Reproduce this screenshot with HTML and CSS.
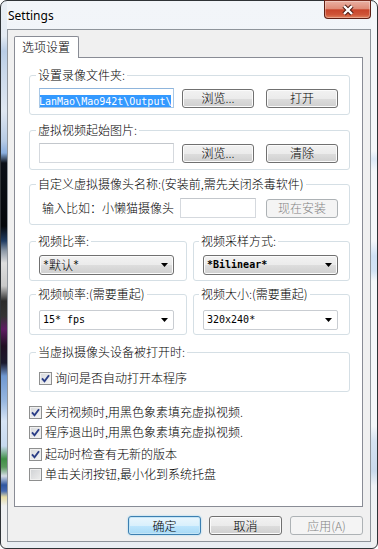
FILE: index.html
```html
<!DOCTYPE html>
<html lang="zh-CN">
<head>
    <meta charset="UTF-8">
    <meta name="viewport" content="width=device-width, initial-scale=1.0">
    <title>Settings</title>
    <link rel="stylesheet" href="styles.css">
</head>
<body>
    <div class="window">
        <div class="titlebar">
            <span class="title">Settings</span>
            <button class="close-btn" aria-label="关闭">
                <svg width="14" height="12" viewBox="0 0 14 12">
                    <path d="M3 2 L11 10 M11 2 L3 10" stroke="#4a1a12" stroke-width="4.4" fill="none"/>
                    <path d="M3 2 L11 10 M11 2 L3 10" stroke="#ffffff" stroke-width="2.4" fill="none"/>
                </svg>
            </button>
        </div>

        <div class="client">
            <div class="tabs">
                <div class="tab">选项设置</div>
            </div>

            <div class="panel">
                <!-- 录像文件夹 -->
                <fieldset class="group">
                    <legend>设置录像文件夹:</legend>
                    <div class="row">
                        <div class="textbox focused"><span class="mono sel">LanMao\Mao942t\Output\</span></div>
                        <button class="btn btn-first">浏览...</button>
                        <button class="btn btn-second">打开</button>
                    </div>
                </fieldset>

                <!-- 起始图片 -->
                <fieldset class="group group-picture">
                    <legend>虚拟视频起始图片:</legend>
                    <div class="row">
                        <div class="textbox"></div>
                        <button class="btn btn-first">浏览...</button>
                        <button class="btn btn-second">清除</button>
                    </div>
                </fieldset>

                <!-- 摄像头名称 -->
                <fieldset class="group group-name">
                    <legend>自定义虚拟摄像头名称:(安装前,需先关闭杀毒软件)</legend>
                    <div class="row">
                        <span class="hint">输入比如：小懒猫摄像头</span>
                        <div class="textbox textbox-small"></div>
                        <button class="btn btn-second" disabled>现在安装</button>
                    </div>
                </fieldset>

                <div class="pair pair-first">
                    <fieldset class="group">
                        <legend>视频比率:</legend>
                        <div class="row">
                            <div class="combo combo-list"><span class="mono">*</span><span>默认</span><span class="mono">*</span>
                                <svg class="arrow" width="7" height="4" viewBox="0 0 7 4"><polygon points="0,0 7,0 3.5,4" fill="#000"/></svg>
                            </div>
                        </div>
                    </fieldset>
                    <fieldset class="group">
                        <legend>视频采样方式:</legend>
                        <div class="row">
                            <div class="combo combo-list"><span class="mono bold">*Bilinear*</span>
                                <svg class="arrow" width="7" height="4" viewBox="0 0 7 4"><polygon points="0,0 7,0 3.5,4" fill="#000"/></svg>
                            </div>
                        </div>
                    </fieldset>
                </div>

                <div class="pair pair-second">
                    <fieldset class="group">
                        <legend>视频帧率:(需要重起)</legend>
                        <div class="row">
                            <div class="combo combo-edit"><span class="mono">15* fps</span>
                                <svg class="arrow" width="7" height="4" viewBox="0 0 7 4"><polygon points="0,0 7,0 3.5,4" fill="#000"/></svg>
                            </div>
                        </div>
                    </fieldset>
                    <fieldset class="group">
                        <legend>视频大小:(需要重起)</legend>
                        <div class="row">
                            <div class="combo combo-edit"><span class="mono">320x240*</span>
                                <svg class="arrow" width="7" height="4" viewBox="0 0 7 4"><polygon points="0,0 7,0 3.5,4" fill="#000"/></svg>
                            </div>
                        </div>
                    </fieldset>
                </div>

                <fieldset class="group group-open">
                    <legend>当虚拟摄像头设备被打开时:</legend>
                    <label class="check">
                        <span class="box"><svg width="11" height="11" viewBox="0 0 11 11"><path d="M2 5.4 L4.5 8.3 L9 2.2" stroke="#2a3d86" stroke-width="1.9" fill="none"/></svg></span>
                        询问是否自动打开本程序
                    </label>
                </fieldset>

                <div class="checks">
                    <label class="check">
                        <span class="box"><svg width="11" height="11" viewBox="0 0 11 11"><path d="M2 5.4 L4.5 8.3 L9 2.2" stroke="#2a3d86" stroke-width="1.9" fill="none"/></svg></span>
                        关闭视频时,用黑色象素填充虚拟视频.
                    </label>
                    <label class="check">
                        <span class="box"><svg width="11" height="11" viewBox="0 0 11 11"><path d="M2 5.4 L4.5 8.3 L9 2.2" stroke="#2a3d86" stroke-width="1.9" fill="none"/></svg></span>
                        程序退出时,用黑色象素填充虚拟视频.
                    </label>
                    <label class="check spaced">
                        <span class="box"><svg width="11" height="11" viewBox="0 0 11 11"><path d="M2 5.4 L4.5 8.3 L9 2.2" stroke="#2a3d86" stroke-width="1.9" fill="none"/></svg></span>
                        起动时检查有无新的版本
                    </label>
                    <label class="check">
                        <span class="box box-empty"></span>
                        单击关闭按钮,最小化到系统托盘
                    </label>
                </div>
            </div>

            <div class="footer">
                <button class="btn btn-default">确定</button>
                <button class="btn">取消</button>
                <button class="btn" disabled>应用(A)</button>
            </div>
        </div>
    </div>
</body>
</html>
```

FILE: styles.css
```css
/* Reset */
* {
    margin: 0;
    padding: 0;
    box-sizing: border-box;
}

body {
    background: #ffffff;
    font-family: "Noto Sans CJK SC", sans-serif;
    font-size: 12px;
    font-weight: 300;
    color: #000;
}

/* Window frame (Aero glass) */
.window {
    width: 378px;
    height: 549px;
    display: flex;
    flex-direction: column;
    padding: 0 6px 6px;
    border: 1px solid #2f3337;
    border-radius: 7px 7px 6px 6px;
    background:
        linear-gradient(to bottom, #e9eef4 0, #e4ebf3 35px, #b9cde6 50px, #c9d8ea 70px, #dfe7f1 110px, #b7cbe5 140px, #8aaede 152px, #0b1018 162px, #04070b 225px, #203c62 240px, #8d99a7 250px, #dedede 262px, #c9c9c9 285px, #2b2b2b 300px, #333333 315px, #5e1d63 328px, #201023 345px, #1b1a2e 362px, #6f98d1 375px, #97b7e0 400px, #d6e4f5 420px, #c7d9ef 445px, #3f8f46 458px, #5a9a5e 466px, #d5dde6 475px, #2f56a0 484px, #476ab0 490px, #e6dca3 496px, #eef0f2 505px, #f2f2f2 549px) left top / 6px 100% no-repeat,
        linear-gradient(to bottom, #f4f7fa 0, #f4f7fa 150px, #dce8f6 158px, #f4f7fa 170px, #f4f7fa 240px, #cfe0f4 255px, #d2e2f4 270px, #f4f7fa 280px, #f4f7fa 425px, #d5e2f1 440px, #c9d9ec 470px, #eef2f6 485px, #f0f0f0 549px) right top / 6px 100% no-repeat,
        linear-gradient(to bottom, #f2f5f9, #e9eef3);
}

.titlebar {
    height: 28px;
    flex-shrink: 0;
    display: flex;
    justify-content: space-between;
    align-items: flex-start;
    padding-left: 1px;
}

.title {
    font-family: "Noto Sans", sans-serif;
    font-size: 12px;
    font-weight: 400;
    line-height: 16px;
    padding-top: 7px;
    text-shadow: 0 0 5px #ffffff, 0 0 2px #ffffff;
}

.close-btn {
    width: 47px;
    height: 19px;
    margin-top: -1px;
    display: flex;
    align-items: center;
    justify-content: center;
    border: 1px solid #5e1f14;
    border-top-color: #7a2c1f;
    border-radius: 0 0 4px 4px;
    background: linear-gradient(to bottom, #eab0a3 0%, #df8d79 45%, #c8442a 52%, #cf5538 80%, #e0825f 100%);
    box-shadow: inset 0 0 0 1px rgba(255, 255, 255, 0.3);
}

/* Dialog client area */
.client {
    flex: 1;
    display: flex;
    flex-direction: column;
    background: #f0f0f0;
    border: 1px solid #8e949b;
    padding: 6px 7px 6px 6px;
}

.tabs {
    display: flex;
}

.tab {
    position: relative;
    z-index: 1;
    width: 65px;
    height: 22px;
    margin-bottom: -1px;
    padding: 3px 0 0 7px;
    border: 1px solid #898c95;
    border-bottom: none;
    border-radius: 2px 2px 0 0;
    background: #ffffff;
    line-height: 14px;
}

.panel {
    height: 450px;
    border: 1px solid #898c95;
    background: #ffffff;
    padding: 10px 12px 0 14px;
}

/* Group boxes */
.group {
    margin: 0;
    min-width: 0;
    padding: 6px 11px 6px 9px;
    border: 1px solid #d5dfe5;
    border-radius: 3px;
}

.group legend {
    margin-left: -3px;
    padding: 0 2px;
    line-height: 14px;
}

.group-picture {
    margin-top: 8px;
}

.group-name {
    margin-top: 7px;
    padding-top: 7px;
}

.pair {
    display: grid;
    grid-template-columns: 158px 157px;
    column-gap: 6px;
}

.pair .group + .group legend {
    margin-left: -4px;
}

.pair-first {
    margin-top: 9px;
}

.pair-first .group {
    padding-top: 7px;
    padding-bottom: 5px;
}

.pair-second {
    margin-top: 6px;
}

.pair-second .group {
    padding-top: 9px;
    padding-bottom: 4px;
}

.group-open {
    margin-top: 10px;
    padding-top: 12px;
}

.row {
    display: flex;
    align-items: center;
    height: 20px;
}

.hint {
    width: 141px;
    padding-left: 3px;
    line-height: 14px;
}

/* Controls */
.textbox {
    width: 135px;
    height: 20px;
    margin-right: 8px;
    padding: 2px 0 0 1px;
    overflow: hidden;
    white-space: nowrap;
    background: #ffffff;
    border: 1px solid #d5d9de;
    border-top-color: #c3c7cc;
}

.textbox.focused {
    border-color: #a9c8e6;
    border-top-color: #8fb5dc;
}

.textbox-small {
    width: 76px;
    margin-right: 0;
}

.mono {
    font-family: "DejaVu Sans Mono", monospace;
    font-size: 10px;
    font-weight: 400;
    line-height: 14px;
}

.bold {
    font-weight: bold;
}

.sel {
    display: inline-block;
    margin-left: -2px;
    background: #3399ff;
    color: #ffffff;
}

.btn {
    width: 72px;
    height: 19px;
    font-family: "Noto Sans CJK SC", sans-serif;
    font-size: 12px;
    font-weight: 300;
    line-height: 14px;
    color: #000;
    border: 1px solid #707070;
    border-radius: 3px;
    background: linear-gradient(to bottom, #f2f2f2 0%, #ebebeb 50%, #dddddd 51%, #cfcfcf 100%);
    box-shadow: inset 0 0 0 1px #fbfbfb;
}

.btn-second {
    margin-left: 12px;
}

.hint + .textbox + .btn-second {
    margin-left: 10px;
}

.btn:disabled {
    color: #838383;
    border-color: #adb2b5;
    background: #f4f4f4;
    box-shadow: none;
}

.btn-default {
    border-color: #3c7fb1;
    background: linear-gradient(to bottom, #eaf6fd 0%, #d9f0fc 50%, #bee6fd 51%, #a7d9f5 100%);
    box-shadow: inset 0 0 0 1px #c4e5f6, 0 0 2px #8fd0f3;
}

.combo {
    width: 135px;
    height: 20px;
    display: flex;
    align-items: center;
    padding: 0 5px 0 3px;
    line-height: 14px;
}

.combo .arrow {
    margin-left: auto;
}

.combo-list {
    border: 1px solid #707070;
    border-radius: 3px;
    background: linear-gradient(to bottom, #f2f2f2 0%, #ebebeb 50%, #dddddd 51%, #cfcfcf 100%);
    box-shadow: inset 0 0 0 1px #fbfbfb;
}

.combo-edit {
    border: 1px solid #c9cdd2;
    border-radius: 2px;
    background: #ffffff;
}

/* Checkboxes */
.check {
    display: flex;
    align-items: center;
    height: 20px;
    line-height: 14px;
}

.group-open .check {
    height: 14px;
}

.box {
    width: 13px;
    height: 13px;
    margin-right: 3px;
    flex-shrink: 0;
    border: 1px solid #8e8f8f;
    background: linear-gradient(135deg, #d6d8db, #f6f6f6);
    box-shadow: inset 0 0 0 1px #f0f0f0;
}

.box svg {
    display: block;
}

.box-empty {
    background: linear-gradient(135deg, #cfd1d4, #eeeeee);
}

.checks {
    margin-top: 10px;
}

.check.spaced {
    margin-top: 2px;
}

/* Dialog buttons */
.footer {
    display: flex;
    justify-content: flex-end;
    gap: 8px;
    margin-top: 9px;
}

.footer .btn {
    width: 73px;
}
```
